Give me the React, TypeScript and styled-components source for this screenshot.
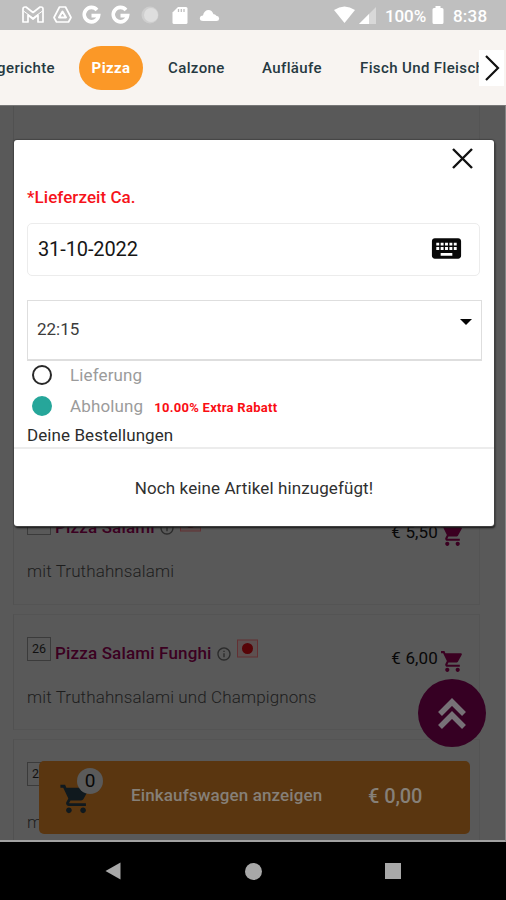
import React from "react";
import styled, { createGlobalStyle } from "styled-components";
import { MdShoppingCart, MdKeyboard, MdInfoOutline } from "react-icons/md";

const GlobalStyle = createGlobalStyle`
  * { box-sizing: border-box; }
  html, body { margin: 0; background: #000; }
  body { font-family: Roboto, "Liberation Sans", sans-serif; }
`;

const Screen = styled.div`
  width: 506px;
  height: 900px;
  display: flex;
  flex-direction: column;
  overflow: hidden;
`;

const StatusBar = styled.header`
  height: 30px;
  flex: none;
  display: flex;
  justify-content: space-between;
  padding: 0 18px 0 22px;
  background: #bfbfbf;
  color: #fff;
`;

const StatusIcons = styled.div`
  display: flex;
  align-items: center;
  gap: 9px;
`;

const StatusInfo = styled.div`
  display: flex;
  align-items: center;
  gap: 4px;
`;

const StatusText = styled.span<{ $width: number; $spacing: number }>`
  width: ${(p) => p.$width}px;
  font-size: 17px;
  font-weight: 500;
  letter-spacing: ${(p) => p.$spacing}px;
  line-height: 20px;
  padding-top: 2px;
  white-space: nowrap;
`;

const CategoryBar = styled.nav`
  height: 75px;
  flex: none;
  display: flex;
  align-items: center;
  background: #f8f4f1;
  overflow: hidden;
`;

const Category = styled.span<{ $width: number; $active?: boolean; $end?: boolean }>`
  flex: none;
  width: ${(p) => p.$width}px;
  height: 44px;
  display: flex;
  align-items: center;
  justify-content: ${(p) => (p.$active ? "center" : p.$end ? "flex-end" : "flex-start")};
  border-radius: 22px;
  background: ${(p) => (p.$active ? "#fb9827" : "transparent")};
  color: ${(p) => (p.$active ? "#fff" : "#263941")};
  font-size: 15px;
  font-weight: ${(p) => (p.$active ? 700 : 500)};
  letter-spacing: 0.38px;
  white-space: nowrap;
`;

const CategoryList = styled.div`
  display: flex;
  align-items: center;
  width: 479px;
  overflow: hidden;
`;

const Gap = styled.i<{ $w: number }>`
  flex: none;
  width: ${(p) => p.$w}px;
`;

const NextButton = styled.button`
  width: 25px;
  height: 36px;
  padding: 0;
  border: 0;
  background: #fff;
  display: grid;
  place-items: center;
`;

const Content = styled.main`
  height: 737px;
  flex: none;
  position: relative;
  overflow: hidden;
  background: #595959;
  border-top: 1px solid #777;
  border-right: 1px solid #858585;
  border-bottom: 2px solid #a2a2a2;
`;

const MenuList = styled.section`
  padding: 0 25px 0 13px;
  display: flex;
  flex-direction: column;
  gap: 9px;
`;

const CardTail = styled.div`
  flex: none;
  height: 373px;
  border: 1px solid #545454;
  border-top: 0;
  border-left-color: #515151;
`;

const MenuCard = styled.article`
  flex: none;
  height: 116.5px;
  border: 1px solid #545454;
  border-left-color: #515151;
  padding: 22px 12px 0 13px;
`;

const CardHead = styled.div`
  display: flex;
  align-items: flex-start;
  height: 40px;
`;

const ItemNumber = styled.span`
  width: 24px;
  height: 24px;
  border: 1px solid #3b3b3b;
  color: #111;
  font-size: 12.5px;
  line-height: 22px;
  text-align: center;
`;

const ItemName = styled.h3`
  margin: 5px 0 0 4px;
  color: #3b0021;
  font-size: 17px;
  font-weight: 500;
  letter-spacing: 0.16px;
  line-height: 22px;
  white-space: nowrap;
`;

const InfoMark = styled.span`
  margin: 9px 0 0 4px;
  color: #2b2b2b;
  display: flex;
`;

const Flag = styled.svg`
  margin: 2px 0 0 5px;
`;

const Price = styled.span`
  margin: 11px 0 0 auto;
  font-size: 17px;
  letter-spacing: 0.15px;
  line-height: 20px;
  color: #080808;
`;

const AddIcon = styled.span`
  display: flex;
  margin: 12px 2px 0 2px;
  color: #3b0021;
`;

const Description = styled.p`
  margin: 10px 0 0;
  font-size: 17px;
  font-weight: 300;
  letter-spacing: 0.12px;
  line-height: 20px;
  color: #1d1d1d;
`;

const ScrollTop = styled.button`
  position: absolute;
  right: 19px;
  top: 573px;
  width: 68px;
  height: 68px;
  border: 0;
  border-radius: 50%;
  background: #360023;
  display: grid;
  place-items: center;
`;

const CartBar = styled.div`
  position: absolute;
  left: 39px;
  top: 655px;
  width: 431px;
  height: 73px;
  border-radius: 5px;
  background: #5a3610;
  color: #868078;
  display: flex;
  align-items: center;
  font-weight: 500;
`;

const CartBadgeBox = styled.div`
  position: relative;
  width: 92px;
  height: 73px;
  flex: none;
  padding: 21px 0 0 20px;
  color: #10191e;
`;

const Badge = styled.span`
  position: absolute;
  left: 38px;
  top: 7px;
  width: 26px;
  height: 26px;
  border-radius: 50%;
  background: #5a5a5a;
  color: #080808;
  font-size: 19px;
  font-weight: 400;
  line-height: 25px;
  text-align: center;
`;

const CartLabel = styled.span`
  width: 237px;
  padding-bottom: 5px;
  font-size: 17px;
  letter-spacing: 0.13px;
  white-space: nowrap;
`;

const CartTotal = styled.span`
  padding-bottom: 3px;
  font-size: 20px;
  letter-spacing: -0.1px;
`;

const Dialog = styled.section`
  position: absolute;
  left: 14px;
  top: 34px;
  width: 480px;
  height: 386px;
  background: #fff;
  border-radius: 3px;
  box-shadow: 0 0 1px 1px #444, 1px 2px 2px #111;
`;

const DialogTop = styled.div`
  display: flex;
  justify-content: flex-end;
  padding: 8px 21px 0 0;
  height: 46px;
`;

const FieldLabel = styled.label`
  display: block;
  padding-left: 13px;
  height: 37px;
  font-size: 17px;
  font-weight: 500;
  letter-spacing: 0.05px;
  line-height: 23px;
  color: #f6131b;
`;

const DateField = styled.div`
  margin-left: 13px;
  width: 453px;
  height: 53px;
  border: 1px solid #ececec;
  border-radius: 5px;
  display: flex;
  align-items: center;
  justify-content: space-between;
  padding: 0 15px 2px 10px;
  font-size: 20px;
  letter-spacing: -0.12px;
  color: #161616;
`;

const TimeField = styled.div`
  margin: 24px 0 0 13px;
  width: 455px;
  height: 61px;
  border: 1px solid #dedede;
  border-bottom-width: 2px;
  display: flex;
  justify-content: space-between;
  padding: 17px 9px 0 9px;
  font-size: 17px;
  line-height: 22px;
  color: #3c3c3c;
`;

const OptionGroup = styled.div`
  height: 61px;
  margin-top: -1px;
  margin-bottom: 1px;
`;

const Option = styled.div`
  display: flex;
  align-items: center;
  height: 30.5px;
  padding-left: 18px;
  color: #9b9b9b;
  font-size: 17px;
  letter-spacing: 0.13px;
`;

const Radio = styled.span<{ $checked?: boolean }>`
  width: 20px;
  height: 20px;
  margin-right: 18px;
  border-radius: 50%;
  border: 2px solid ${(p) => (p.$checked ? "#26a69a" : "#282828")};
  background: ${(p) => (p.$checked ? "#26a69a" : "#fff")};
`;

const Discount = styled.strong`
  margin: 3px 0 0 11px;
  font-size: 13px;
  font-weight: 700;
  letter-spacing: 0.28px;
  color: #fa0d13;
`;

const OrdersTitle = styled.h2`
  margin: 0;
  height: 27px;
  padding-left: 13px;
  border-bottom: 2px solid #ececec;
  font-size: 17px;
  font-weight: 400;
  letter-spacing: 0.08px;
  line-height: 26px;
  color: #2c2c2c;
`;

const EmptyText = styled.p`
  margin: 28px 0 0;
  text-align: center;
  font-size: 17px;
  letter-spacing: 0.1px;
  line-height: 22px;
  color: #303030;
`;

const SystemBar = styled.footer`
  flex: 1;
  background: #000;
  display: flex;
  justify-content: space-between;
  align-items: center;
  padding: 0 105px;
`;

const Japan = () => (
  <Flag width="21" height="19" viewBox="0 0 21 19">
    <rect x=".5" y="1" width="20" height="17" fill="#5d5050" stroke="#633033" />
    <circle cx="10.5" cy="9.5" r="5.5" fill="#570407" />
  </Flag>
);

const items = [
  { no: "25", name: "Pizza Salami", price: "€ 5,50", text: "mit Truthahnsalami" },
  { no: "26", name: "Pizza Salami Funghi", price: "€ 6,00", text: "mit Truthahnsalami und Champignons" },
  { no: "27", name: "", price: "", text: "mit" },
];

const GoogleMark = () => (
  <svg width="20" height="20" viewBox="0 0 20 20" fill="none" stroke="#fff" strokeWidth="3.6">
    <path d="M16 5A7.2 7.2 0 1 0 17.600 10.600H10.500" />
  </svg>
);

export default function App() {
  return (
    <Screen>
      <GlobalStyle />
      <StatusBar>
        <StatusIcons>
          <svg width="22" height="18" viewBox="0 0 22 18" fill="none" stroke="#fff" strokeWidth="1.7" strokeLinejoin="round">
            <path d="M1 3Q1 1 3 1H4L11 6.5 18 1h1q2 0 2 2v13h-5V9l-5 4-5-4v7H1z" />
            <path d="M1.5 5 11 12l9.500-7" strokeWidth="1" />
          </svg>
          <svg width="19" height="18" viewBox="0 0 19 18" fill="none" stroke="#fff" strokeWidth="1.7" strokeLinejoin="round">
            <path d="M6.500 1h6L18 11.500 15.500 16h-12L1 11.500z" />
            <path d="M9.500 5.500 13 11.500H6z" strokeWidth="2" />
          </svg>
          <GoogleMark />
          <GoogleMark />
          <svg width="22" height="18" viewBox="-2 0 22 18">
            <circle cx="9" cy="9" r="8.500" fill="#cecece" />
            <circle cx="10" cy="9" r="7" fill="#dedede" />
          </svg>
          <svg width="20" height="19" viewBox="-2 0 20 19">
            <path d="M6 1h8q1.500 0 1.500 1.500v14Q15.500 18 14 18H2Q.5 18 .5 16.500V6.500z" fill="#fff" />
            <path d="M6.500 3v3M9.300 3v3M12 3v3" stroke="#bfbfbf" strokeWidth="1.300" />
          </svg>
          <svg width="21" height="13" viewBox="0 0 21 13">
            <path d="M4 12Q1 12 .8 9.500 1 6.700 4 6.500 5 1.500 9 1q4-.2 5.500 4.300 2-.3 2.800 1.500Q20 7 20.200 9.500 20 12 17.500 12z" fill="#fff" />
          </svg>
        </StatusIcons>
        <StatusInfo>
          <svg width="21" height="18" viewBox="0 0 21 18"><path d="M0 4Q10.500-3 21 4L10.500 17z" fill="#fff" /></svg>
          <svg width="17" height="17" viewBox="0 0 17 17"><path d="M17 0v17H0z" fill="#d8d8d8" /><path d="M10 7v10H0z" fill="#fff" /></svg>
          <Gap $w={1} />
          <StatusText $width={43} $spacing={-0.1}>100%</StatusText>
          <svg width="12" height="19" viewBox="0 0 12 19"><path d="M3.500 0h5v2H10q1.500 0 1.500 1.500v13Q11.500 18 10 18H2Q.5 18 .5 16.500v-13Q.5 2 2 2h1.500z" fill="#fff" /></svg>
          <Gap $w={1} />
          <StatusText $width={35} $spacing={0.2}>8:38</StatusText>
        </StatusInfo>
      </StatusBar>

      <CategoryBar>
        <CategoryList>
          <Category $width={55} $end>Nudelgerichte</Category>
          <Gap $w={24} />
          <Category $width={64} $active>Pizza</Category>
          <Gap $w={25} />
          <Category $width={94}>Calzone</Category>
          <Category $width={98}>Aufläufe</Category>
          <Category $width={170}>Fisch Und Fleischgerichte</Category>
        </CategoryList>
        <NextButton aria-label="Weiter">
          <svg width="16" height="26" viewBox="0 0 16 26" fill="none" stroke="#111" strokeWidth="2.200"><path d="m2 1 12 12L2 25" /></svg>
        </NextButton>
      </CategoryBar>

      <Content>
        <MenuList>
          <CardTail />
          {items.map((item) => (
            <MenuCard key={item.no}>
              <CardHead>
                <ItemNumber>{item.no}</ItemNumber>
                <ItemName>{item.name}</ItemName>
                <InfoMark><MdInfoOutline size={16} /></InfoMark>
                <Japan />
                <Price>{item.price}</Price>
                <AddIcon><MdShoppingCart size={25} /></AddIcon>
              </CardHead>
              <Description>{item.text}</Description>
            </MenuCard>
          ))}
        </MenuList>

        <ScrollTop aria-label="Nach oben">
          <svg width="30" height="32" viewBox="0 0 30 32" fill="none" stroke="#777177" strokeWidth="5.500"><path d="M3 17 15 5l12 12M3 30l12-12 12 12" /></svg>
        </ScrollTop>

        <CartBar>
          <CartBadgeBox>
            <MdShoppingCart size={34} />
            <Badge>0</Badge>
          </CartBadgeBox>
          <CartLabel>Einkaufswagen anzeigen</CartLabel>
          <CartTotal>€ 0,00</CartTotal>
        </CartBar>

        <Dialog role="dialog">
          <DialogTop>
            <svg width="21" height="21" viewBox="0 0 21 21" stroke="#111" strokeWidth="2.400"><path d="m1 1 19 19M20 1 1 20" /></svg>
          </DialogTop>
          <FieldLabel>*Lieferzeit Ca.</FieldLabel>
          <DateField>31-10-2022<MdKeyboard size={35} color="#080808" /></DateField>
          <TimeField>
            22:15
            <svg width="12" height="7" viewBox="0 -1 12 7"><path d="M0 0h12L6 6z" fill="#050505" /></svg>
          </TimeField>
          <OptionGroup>
            <Option><Radio />Lieferung</Option>
            <Option><Radio $checked />Abholung<Discount>10.00% Extra Rabatt</Discount></Option>
          </OptionGroup>
          <OrdersTitle>Deine Bestellungen</OrdersTitle>
          <EmptyText>Noch keine Artikel hinzugefügt!</EmptyText>
        </Dialog>
      </Content>

      <SystemBar>
        <svg width="16" height="18" viewBox="0 0 16 18"><path d="M15.500.5v17L.5 9z" fill="#a8a8a8" /></svg>
        <svg width="17" height="17" viewBox="0 0 17 17"><circle cx="8.500" cy="8.500" r="8.500" fill="#a8a8a8" /></svg>
        <svg width="16" height="16" viewBox="0 0 16 16"><path d="M0 0h16v16H0z" fill="#a8a8a8" /></svg>
      </SystemBar>
    </Screen>
  );
}
